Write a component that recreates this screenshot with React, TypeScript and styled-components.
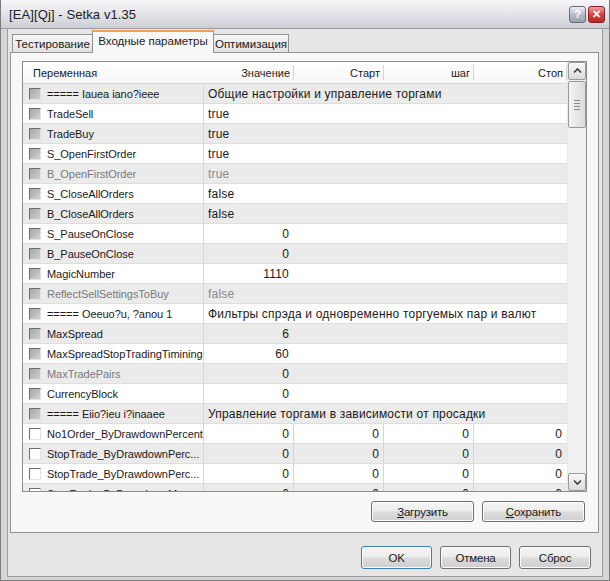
import React from 'react';
import styled, { createGlobalStyle } from 'styled-components';

const GlobalStyle = createGlobalStyle`
  html, body {
    margin: 0;
    padding: 0;
    background: #ffffff;
  }
  body {
    font-family: 'Liberation Sans', Arial, sans-serif;
    font-size: 11px;
    color: #1a1a1a;
  }
`;

type Row = {
  name: string;
  value?: string;
  start?: string;
  step?: string;
  stop?: string;
  group?: boolean;
  dim?: boolean;
  dimName?: boolean;
  align?: 'left' | 'right';
  enabled?: boolean;
};

const rows: Row[] = [
  { name: '===== Iauea iano?ieee', value: 'Общие настройки и управление торгами', group: true },
  { name: 'TradeSell', value: 'true' },
  { name: 'TradeBuy', value: 'true' },
  { name: 'S_OpenFirstOrder', value: 'true' },
  { name: 'B_OpenFirstOrder', value: 'true', dim: true, dimName: true },
  { name: 'S_CloseAllOrders', value: 'false' },
  { name: 'B_CloseAllOrders', value: 'false' },
  { name: 'S_PauseOnClose', value: '0', align: 'right' },
  { name: 'B_PauseOnClose', value: '0', align: 'right' },
  { name: 'MagicNumber', value: '1110', align: 'right' },
  { name: 'ReflectSellSettingsToBuy', value: 'false', dim: true, dimName: true },
  { name: '===== Oeeuo?u, ?anou 1', value: 'Фильтры спрэда и одновременно торгуемых пар и валют', group: true },
  { name: 'MaxSpread', value: '6', align: 'right' },
  { name: 'MaxSpreadStopTradingTimining', value: '60', align: 'right' },
  { name: 'MaxTradePairs', value: '0', align: 'right', dimName: true },
  { name: 'CurrencyBlock', value: '0', align: 'right' },
  { name: '===== Eiio?ieu i?inaaee', value: 'Управление торгами в зависимости от просадки', group: true },
  { name: 'No1Order_ByDrawdownPercent', value: '0', start: '0', step: '0', stop: '0', align: 'right', enabled: true },
  { name: 'StopTrade_ByDrawdownPerc...', value: '0', start: '0', step: '0', stop: '0', align: 'right', enabled: true },
  { name: 'StopTrade_ByDrawdownPerc...', value: '0', start: '0', step: '0', stop: '0', align: 'right', enabled: true },
  { name: 'StopTrade_ByDrawdownM...', value: '0', start: '0', step: '0', stop: '0', align: 'right', enabled: true },
];

const Window = styled.div`
  width: 610px;
  height: 581px;
  box-sizing: border-box;
  display: flex;
  flex-direction: column;
  background: #e6e6e6;
  border: 1px solid #7c7c7c;
  border-top: none;
  overflow: hidden;
`;

const TitleBar = styled.div`
  height: 28px;
  flex: none;
  display: flex;
  align-items: center;
  padding: 0 4px 0 8px;
  background: linear-gradient(#f6f6f8 0%, #e6e6ec 45%, #cdcdd5 100%);
  border-bottom: 1px solid #9a9aa2;
`;

const Title = styled.div`
  flex: 1;
  font-size: 13px;
  color: #202020;
  letter-spacing: 0.1px;
`;

const CaptionButton = styled.div<{ $close?: boolean }>`
  width: 17px;
  height: 17px;
  margin-left: 2px;
  box-sizing: border-box;
  border: 1px solid ${p => (p.$close ? '#8a2020' : '#6c6c78')};
  border-radius: 3px;
  background: ${p =>
    p.$close
      ? 'linear-gradient(#f0a0a0, #d04848 50%, #b82828)'
      : 'linear-gradient(#f0f0f4, #b8bcc8 50%, #9ca0ae)'};
  color: #fff;
  font-size: 11px;
  font-weight: bold;
  display: flex;
  align-items: center;
  justify-content: center;
`;

const Frame = styled.div`
  flex: 1;
  display: flex;
  flex-direction: column;
  border-left: 6px solid #d6d6d8;
  border-right: 6px solid #d6d6d8;
  border-bottom: 3px solid #d6d6d8;
  box-shadow: inset 1px 0 0 #9c9c9c, inset -1px 0 0 #9c9c9c, inset 0 -1px 0 #9c9c9c;
  padding: 1px 4px 0 3px;
`;

const TabStrip = styled.div`
  display: flex;
  align-items: flex-end;
  height: 23px;
  padding-left: 2px;
  position: relative;
  z-index: 1;
`;

const Tab = styled.div<{ $active?: boolean; $w: number }>`
  width: ${p => p.$w}px;
  height: ${p => (p.$active ? 23 : 19)}px;
  box-sizing: border-box;
  border: 1px solid #929292;
  border-bottom: ${p => (p.$active ? 'none' : '1px solid #929292')};
  border-top: ${p => (p.$active ? '2px solid #f0a050' : '1px solid #929292')};
  margin-right: ${p => (p.$active ? -1 : 0)}px;
  margin-left: ${p => (p.$active ? -1 : 0)}px;
  background: ${p => (p.$active ? '#f8f8f8' : 'linear-gradient(#f6f6f6, #e2e2e2)')};
  display: flex;
  align-items: center;
  justify-content: center;
  font-size: 11.5px;
  padding-bottom: ${p => (p.$active ? 4 : 0)}px;
`;

const Panel = styled.div`
  height: 481px;
  margin-top: -1px;
  box-sizing: border-box;
  border: 1px solid #929292;
  background: #f8f8f8;
  padding: 8px 11px 0 11px;
  display: flex;
  flex-direction: column;
`;

const List = styled.div`
  height: 431px;
  box-sizing: border-box;
  border: 1px solid #8c8c8c;
  background: #ffffff;
  display: flex;
  overflow: hidden;
`;

const Grid = styled.div`
  flex: 1;
  overflow: hidden;
`;

const cols = '181px 90px 90px 90px 93px';

const HeaderRow = styled.div`
  display: grid;
  grid-template-columns: ${cols};
  height: 22px;
  box-sizing: border-box;
  background: linear-gradient(#ffffff, #f6f6f6);
  border-bottom: 1px solid #d8d8d8;
  font-size: 11px;
`;

const HeaderCell = styled.div<{ $left?: boolean }>`
  display: flex;
  align-items: center;
  justify-content: ${p => (p.$left ? 'flex-start' : 'flex-end')};
  padding: 0 ${p => (p.$left ? 0 : 4)}px 0 ${p => (p.$left ? 10 : 0)}px;
  position: relative;
  &::after {
    content: '';
    position: absolute;
    right: 0;
    top: 3px;
    bottom: 3px;
    width: 1px;
    background: ${p => (p.$left ? 'transparent' : '#d4d4d4')};
  }
`;

const DataRow = styled.div<{ $shade: boolean }>`
  display: grid;
  grid-template-columns: ${cols};
  height: 20px;
  box-sizing: border-box;
  background: ${p => (p.$shade ? '#ebebeb' : '#ffffff')};
  border-bottom: 1px solid #dedede;
`;

const NameCell = styled.div<{ $dim?: boolean }>`
  display: flex;
  align-items: center;
  padding-left: 6px;
  border-right: 1px solid #d6d6d6;
  color: ${p => (p.$dim ? '#7a7a7a' : '#1a1a1a')};
  white-space: nowrap;
  overflow: hidden;
  font-size: 11px;
  letter-spacing: -0.05px;
`;

const Check = styled.span<{ $on?: boolean }>`
  width: 12px;
  height: 12px;
  flex: none;
  box-sizing: border-box;
  margin-right: 6px;
  border-top: 1px solid #6e6e6e;
  border-left: 1px solid #6e6e6e;
  border-right: 1px solid #e2e2e2;
  border-bottom: 1px solid #e2e2e2;
  background: ${p => (p.$on ? '#ffffff' : 'linear-gradient(135deg, #a8a8a8, #d0d0d0)')};
`;

const ValueCell = styled.div<{ $align?: 'left' | 'right'; $dim?: boolean; $line?: boolean; $span?: boolean }>`
  display: flex;
  align-items: center;
  justify-content: ${p => (p.$align === 'right' ? 'flex-end' : 'flex-start')};
  padding: 0 4px;
  grid-column: ${p => (p.$span ? '2 / 6' : 'auto')};
  border-right: 1px solid ${p => (p.$line ? '#d6d6d6' : 'transparent')};
  color: ${p => (p.$dim ? '#8a8a8a' : '#1a1a1a')};
  white-space: nowrap;
  overflow: hidden;
  font-size: 12px;
  letter-spacing: 0.2px;
`;

const ScrollBar = styled.div`
  width: 18px;
  flex: none;
  display: flex;
  flex-direction: column;
  background: #f0f0f0;
  border-left: 1px solid #e8e8e8;
`;

const ScrollButton = styled.div`
  height: 18px;
  box-sizing: border-box;
  border: 1px solid #9a9a9a;
  border-radius: 2px;
  background: linear-gradient(#f8f8f8, #dcdcdc);
  display: flex;
  align-items: center;
  justify-content: center;
`;

const Thumb = styled.div`
  height: 47px;
  margin-top: 1px;
  box-sizing: border-box;
  border: 1px solid #9a9a9a;
  border-radius: 2px;
  background: linear-gradient(90deg, #f4f4f4, #dcdcdc);
  display: flex;
  flex-direction: column;
  align-items: center;
  justify-content: center;
  gap: 2px;
`;

const Grip = styled.span`
  width: 6px;
  height: 1px;
  background: #8c8c8c;
`;

const Track = styled.div`
  flex: 1;
`;

const ButtonRow = styled.div<{ $pad: string }>`
  display: flex;
  justify-content: flex-end;
  gap: 8px;
  padding: ${p => p.$pad};
`;

const Button = styled.div<{ $w: number; $h: number; $default?: boolean }>`
  width: ${p => p.$w}px;
  height: ${p => p.$h}px;
  box-sizing: border-box;
  border: 1px solid ${p => (p.$default ? '#3c7fb1' : '#707070')};
  border-radius: 3px;
  background: linear-gradient(#f6f6f6 0%, #ebebeb 48%, #dcdcdc 52%, #cfcfcf 100%);
  box-shadow: inset 0 0 0 1px #fbfbfb;
  display: flex;
  align-items: center;
  justify-content: center;
  font-size: 11.5px;
  letter-spacing: -0.2px;
  color: #1a1a1a;
  u {
    text-decoration: underline;
  }
`;

const Chevron = ({ down }: { down?: boolean }) => (
  <svg width="9" height="6" viewBox="0 0 9 6">
    <path
      d={down ? 'M1 1.5 L4.5 5 L8 1.5' : 'M1 4.5 L4.5 1 L8 4.5'}
      fill="none"
      stroke="#3a3a3a"
      strokeWidth="1.6"
    />
  </svg>
);

const App = () => (
  <>
    <GlobalStyle />
    <Window>
      <TitleBar>
        <Title>[EA][Qj] - Setka v1.35</Title>
        <CaptionButton>?</CaptionButton>
        <CaptionButton $close>✕</CaptionButton>
      </TitleBar>
      <Frame>
        <TabStrip>
          <Tab $w={81}>Тестирование</Tab>
          <Tab $w={122} $active>Входные параметры</Tab>
          <Tab $w={76}>Оптимизация</Tab>
        </TabStrip>
        <Panel>
          <List>
            <Grid>
              <HeaderRow>
                <HeaderCell $left>Переменная</HeaderCell>
                <HeaderCell>Значение</HeaderCell>
                <HeaderCell>Старт</HeaderCell>
                <HeaderCell>шаг</HeaderCell>
                <HeaderCell>Стоп</HeaderCell>
              </HeaderRow>
              {rows.map((r, i) => (
                <DataRow key={i} $shade={i % 2 === 0}>
                  <NameCell $dim={r.dimName}>
                    <Check $on={r.enabled} />
                    {r.name}
                  </NameCell>
                  {r.group ? (
                    <ValueCell $span>{r.value}</ValueCell>
                  ) : (
                    <>
                      <ValueCell $align={r.align} $dim={r.dim} $line={!!r.start}>
                        {r.value}
                      </ValueCell>
                      <ValueCell $align="right" $line={!!r.start}>{r.start}</ValueCell>
                      <ValueCell $align="right" $line={!!r.start}>{r.step}</ValueCell>
                      <ValueCell $align="right">{r.stop}</ValueCell>
                    </>
                  )}
                </DataRow>
              ))}
            </Grid>
            <ScrollBar>
              <ScrollButton>
                <Chevron />
              </ScrollButton>
              <Thumb>
                <Grip />
                <Grip />
                <Grip />
                <Grip />
              </Thumb>
              <Track />
              <ScrollButton>
                <Chevron down />
              </ScrollButton>
            </ScrollBar>
          </List>
          <ButtonRow $pad="9px 2px 0 0">
            <Button $w={103} $h={21}>
              <span><u>З</u>агрузить</span>
            </Button>
            <Button $w={103} $h={21}>
              <span><u>С</u>охранить</span>
            </Button>
          </ButtonRow>
        </Panel>
        <ButtonRow $pad="13px 8px 0 0">
          <Button $w={71} $h={23} $default>OK</Button>
          <Button $w={71} $h={23}>Отмена</Button>
          <Button $w={72} $h={23}>Сброс</Button>
        </ButtonRow>
      </Frame>
    </Window>
  </>
);

export default App;
